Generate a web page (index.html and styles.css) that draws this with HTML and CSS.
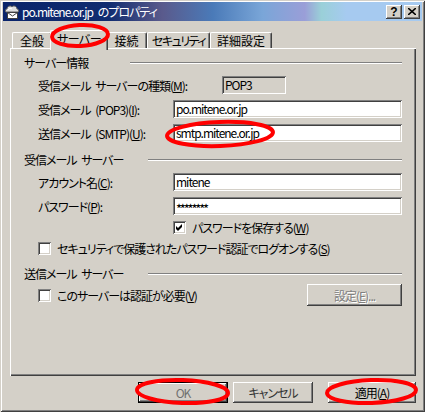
FILE: index.html
```html
<!DOCTYPE html>
<html lang="ja">
<head>
    <meta charset="UTF-8">
    <title>po.mitene.or.jp のプロパティ</title>
    <link rel="stylesheet" href="styles.css">
</head>
<body>
    <div class="window">
        <div class="titlebar">
            <svg class="app-icon" viewBox="0 0 16 16" width="16" height="16">
                <path d="M2 8 C1 8 1 5 3 5 C3 2 7 1 8 3 C9 1 13 2 13 5 C15 5 15 8 14 8 Z" fill="#e0e0e0" stroke="#606060" stroke-width="1"/>
                <path d="M4 6 C5 4 7 4 8 5" fill="none" stroke="#ffffff" stroke-width="1"/>
                <rect x="3.5" y="8.5" width="10" height="6" fill="#ffffff" stroke="#404040" stroke-width="1"/>
                <path d="M3.5 8.5 L8.5 12 L13.5 8.5" fill="none" stroke="#404040" stroke-width="1"/>
            </svg>
            <span class="title">po.mitene.or.jp のプロパティ</span>
            <div class="caption-buttons">
                <div class="cap-btn help">?</div>
                <div class="cap-btn">
                    <svg viewBox="0 0 8 7" width="8" height="7">
                        <path d="M0 0 L8 7 M8 0 L0 7" stroke="#000" stroke-width="1.6"/>
                    </svg>
                </div>
            </div>
        </div>

        <div class="tabs">
            <div class="tab tab-general">全般</div>
            <div class="tab tab-server active">サーバー</div>
            <div class="tab tab-conn">接続</div>
            <div class="tab tab-sec">セキュリティ</div>
            <div class="tab tab-adv">詳細設定</div>
        </div>

        <div class="panel">
            <div class="group-title"><span>サーバー情報</span></div>
            <div class="field-row">
                <span class="field-label type-label">受信メール サーバーの種類(<u>M</u>):</span>
                <div class="textbox readonly">POP3</div>
            </div>
            <div class="field-row">
                <span class="field-label">受信メール (POP3)(<u>I</u>):</span>
                <div class="textbox">po.mitene.or.jp</div>
            </div>
            <div class="field-row">
                <span class="field-label">送信メール (SMTP)(<u>U</u>):</span>
                <div class="textbox">smtp.mitene.or.jp</div>
            </div>

            <div class="group-title wide second"><span>受信メール サーバー</span></div>
            <div class="field-row">
                <span class="field-label">アカウント名(<u>C</u>):</span>
                <div class="textbox">mitene</div>
            </div>
            <div class="field-row">
                <span class="field-label">パスワード(<u>P</u>):</span>
                <div class="textbox secret">********</div>
            </div>
            <div class="check-row save-pass">
                <span class="checkbox checked">
                    <svg viewBox="0 0 13 13" width="13" height="13">
                        <polygon points="3,5 5,7 9,3 9,6 5,10 3,8" fill="#000"/>
                    </svg>
                </span>
                <span class="check-label">パスワードを保存する(<u>W</u>)</span>
            </div>
            <div class="check-row spa">
                <span class="checkbox"></span>
                <span class="check-label">セキュリティで保護されたパスワード認証でログオンする(<u>S</u>)</span>
            </div>

            <div class="group-title wide third"><span>送信メール サーバー</span></div>
            <div class="auth-row">
                <span class="checkbox"></span>
                <span class="check-label">このサーバーは認証が必要(<u>V</u>)</span>
                <div class="button disabled settings">設定(<u>E</u>)...</div>
            </div>
        </div>

        <div class="dialog-buttons">
            <div class="button default ok">OK</div>
            <div class="button cancel">キャンセル</div>
            <div class="button apply">適用(<u>A</u>)</div>
        </div>

        <!-- red marks drawn over the screenshot -->
        <svg class="marks" viewBox="0 0 425 412" width="425" height="412">
            <ellipse cx="80" cy="35.5" rx="28" ry="10.5" transform="rotate(-3 80 35.5)"/>
            <ellipse cx="220" cy="134" rx="53" ry="12" transform="rotate(-2 220 134)"/>
            <ellipse cx="182.5" cy="391.5" rx="45.5" ry="11.5" transform="rotate(2 182.5 391.5)"/>
            <ellipse cx="371.5" cy="391.5" rx="44.5" ry="11.5" transform="rotate(-2 371.5 391.5)"/>
        </svg>
    </div>
</body>
</html>
```

FILE: styles.css
```css
body {
    margin: 0;
    background-color: #d4d0c8;
    font-family: "Noto Sans CJK JP", "Liberation Sans", sans-serif;
    font-size: 12px;
    letter-spacing: -1px;
    word-spacing: 3px;
    color: #000;
    font-feature-settings: "palt";
}
.window {
    position: relative;
    width: 425px;
    height: 412px;
    box-sizing: border-box;
    padding: 2px 3px 3px 3px;
    background-color: #d4d0c8;
    box-shadow: inset 1px 1px #d4d0c8, inset -1px -1px #404040, inset 2px 2px #fff, inset -2px -2px #808080;
    display: flex;
    flex-direction: column;
}
.titlebar {
    height: 19px;
    display: flex;
    align-items: center;
    padding: 0 2px 0 1px;
    color: #fff;
    background: linear-gradient(to right, #0a246a 0%, #102c70 25%, #5a5a8c 38%, #4a7ab8 50%, #7aa6d8 62%, #9a9ed8 72%, #9ad0d8 76%, #a6caf0 82%, #a6caf0 100%);
}
.app-icon {
    width: 16px;
    height: 16px;
    margin-right: 2px;
}
.title {
    flex: 1;
    line-height: 19px;
    white-space: nowrap;
}
.caption-buttons {
    display: flex;
}
.cap-btn {
    width: 16px;
    height: 14px;
    box-sizing: border-box;
    background-color: #d4d0c8;
    box-shadow: inset -1px -1px #404040, inset 1px 1px #fff, inset -2px -2px #808080;
    display: flex;
    align-items: center;
    justify-content: center;
    color: #000;
    font-family: "Liberation Sans", sans-serif;
    font-weight: bold;
    font-size: 12px;
    letter-spacing: 0;
    line-height: 14px;
}
.cap-btn + .cap-btn {
    margin-left: 2px;
}

/* tabs */
.tabs {
    display: flex;
    align-items: flex-end;
    height: 18px;
    margin: 9px 0 0 9px;
}
.tab {
    height: 16px;
    box-sizing: border-box;
    line-height: 15px;
    text-align: center;
    border-top: 1px solid #fff;
    border-left: 1px solid #fff;
    border-right: 1px solid #404040;
    box-shadow: inset -1px 0 #808080;
    border-radius: 2px 2px 0 0;
    white-space: nowrap;
    letter-spacing: 0;
}
.tab-general { width: 40px; }
.tab-server { width: 54px; }
.tab-conn { width: 41px; }
.tab-sec { width: 63px; letter-spacing: -1.5px; }
.tab-adv { width: 62px; }
.tab.active {
    position: relative;
    z-index: 1;
    width: 58px;
    height: 20px;
    margin: 0 -2px -2px -2px;
    line-height: 16px;
    letter-spacing: -0.5px;
    background-color: #d4d0c8;
}

/* tab page */
.panel {
    height: 328px;
    box-sizing: border-box;
    margin: 0 6px 0 7px;
    padding: 8px 14px 0 14px;
    box-shadow: inset 1px 1px #fff, inset -1px -1px #404040, inset -2px -2px #808080;
}
.group-title {
    display: flex;
    align-items: center;
    height: 14px;
    line-height: 14px;
}
.group-title span {
    width: 106px;
    flex: none;
    white-space: nowrap;
}
.group-title.wide span {
    width: 124px;
}
.group-title::after {
    content: "";
    flex: 1;
    height: 0;
    border-top: 1px solid #808080;
    border-bottom: 1px solid #fff;
}
.group-title.second {
    margin-top: 11px;
}
.group-title.third {
    margin-top: 12px;
}
.field-row {
    display: flex;
    align-items: center;
    height: 18px;
    margin-top: 6px;
    padding-left: 14px;
}
.field-label {
    width: 135px;
    flex: none;
    white-space: nowrap;
}
.field-label.type-label {
    width: 184px;
}
.textbox {
    flex: 1;
    height: 18px;
    box-sizing: border-box;
    padding-left: 3px;
    line-height: 18px;
    background-color: #fff;
    box-shadow: inset 1px 1px #808080, inset -1px -1px #fff, inset 2px 2px #404040, inset -2px -2px #d4d0c8;
    white-space: nowrap;
}
.textbox.readonly {
    flex: none;
    width: 64px;
    background-color: #d4d0c8;
}
.textbox.secret {
    font-size: 13px;
    letter-spacing: -2.2px;
    line-height: 15px;
    padding-top: 4px;
}
.check-row {
    display: flex;
    align-items: center;
    height: 13px;
}
.check-row.save-pass {
    margin-top: 6px;
    padding-left: 149px;
}
.check-row.spa {
    margin-top: 8px;
    padding-left: 14px;
}
.checkbox {
    width: 13px;
    height: 13px;
    flex: none;
    box-sizing: border-box;
    background-color: #fff;
    box-shadow: inset 1px 1px #808080, inset -1px -1px #fff, inset 2px 2px #404040, inset -2px -2px #d4d0c8;
}
.checkbox svg {
    display: block;
}
.check-label {
    margin-left: 6px;
    white-space: nowrap;
}
.auth-row {
    display: flex;
    align-items: center;
    height: 22px;
    margin-top: 3px;
    padding-left: 14px;
}

/* buttons */
.button {
    height: 21px;
    box-sizing: border-box;
    display: flex;
    align-items: center;
    justify-content: center;
    background-color: #d4d0c8;
    box-shadow: inset -1px -1px #404040, inset 1px 1px #fff, inset -2px -2px #808080, inset 2px 2px #d4d0c8;
    white-space: nowrap;
}
.button.settings {
    width: 95px;
    height: 22px;
    margin-left: auto;
}
.button.disabled {
    color: #808080;
    text-shadow: 1px 1px #fff;
}
.dialog-buttons {
    display: flex;
    justify-content: flex-end;
    margin: 6px 6px 0 0;
}
.button.default {
    box-shadow: inset 0 0 0 1px #000, inset -2px -2px #404040, inset 2px 2px #fff, inset -3px -3px #808080;
}
.button.ok {
    width: 90px;
    color: #707070;
}
.button.cancel {
    width: 80px;
    margin-left: 5px;
    color: #333;
}
.button.apply {
    width: 88px;
    margin-left: 15px;
}

.marks {
    position: absolute;
    top: 0;
    left: 0;
    z-index: 2;
    pointer-events: none;
}
.marks ellipse {
    fill: none;
    stroke: #ff0000;
    stroke-width: 4;
}
```
